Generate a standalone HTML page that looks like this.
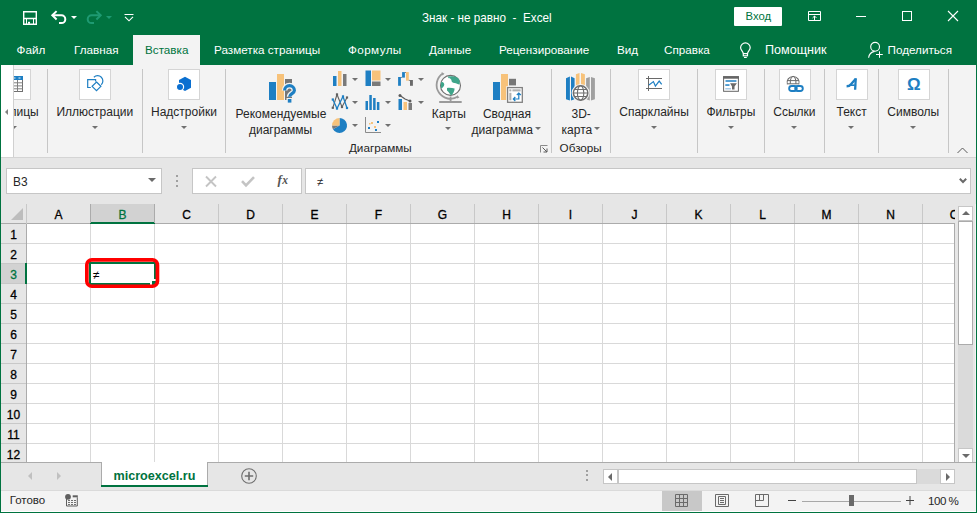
<!DOCTYPE html>
<html><head><meta charset="utf-8"><style>
*{margin:0;padding:0;box-sizing:border-box}
html,body{width:977px;height:513px;overflow:hidden;background:#f3f3f3;font-family:"Liberation Sans",sans-serif;position:relative}
.a{position:absolute}
.t{position:absolute;white-space:nowrap;line-height:1}
svg{position:absolute;overflow:visible}
.tab{color:#fff;font-size:11.7px;top:44px}
.lbl{color:#262626;font-size:12px;top:106px}
.lbl2{color:#262626;font-size:12px;top:122px}
.box{position:absolute;top:69px;width:32px;height:31px;background:#fff;border:1px solid #d5d5d5}
.sep{position:absolute;width:1px;top:69px;height:84px;background:#c6c6c6}
.arr{position:absolute;width:0;height:0;border-left:3.5px solid transparent;border-right:3.5px solid transparent;border-top:3.5px solid #707070}
.inp{position:absolute;background:#fff;border:1px solid #c6c6c6}
.ch{position:absolute;top:204px;height:19px;border-right:1px solid #c8c8c8;color:#000;font-size:12px;text-align:center;line-height:23px;-webkit-text-stroke:0.3px currentColor}
.rh{position:absolute;left:1px;width:25px;height:20px;border-bottom:1px solid #c8c8c8;color:#000;font-size:12px;text-align:center;line-height:23px;-webkit-text-stroke:0.3px currentColor}
</style></head><body>
<div class="a" style="left:0;top:0;width:977px;height:65px;background:#007340"></div>
<svg style="left:23px;top:11px" width="14" height="14" viewBox="0 0 14 14"><path d="M0.7 0.7H13.3V13.3H0.7Z M0.7 7.5H13.3" fill="none" stroke="#fff" stroke-width="1.4"/><path d="M3.5 7.5V13.3 M10.5 7.5V13.3" fill="none" stroke="#fff" stroke-width="1"/><rect x="5" y="10.8" width="2" height="2" fill="#fff"/></svg>
<svg style="left:50px;top:9px" width="18" height="17" viewBox="0 0 18 17"><path d="M2.5 6.3H11.4A3.9 3.9 0 0 1 11.4 14.1H9" fill="none" stroke="#fff" stroke-width="2"/><path d="M6.6 2.1L2.3 6.3L6.6 10.5" fill="none" stroke="#fff" stroke-width="2"/></svg>
<div class="arr" style="left:70.5px;top:15.5px;border-top-color:#fff;border-left-width:3px;border-right-width:3px;border-top-width:3px"></div>
<svg style="left:85px;top:9px" width="18" height="17" viewBox="0 0 18 17"><path d="M15.5 6.3H6.6A3.9 3.9 0 0 0 6.6 14.1H9" fill="none" stroke="#1e9a72" stroke-width="2"/><path d="M11.4 2.1L15.7 6.3L11.4 10.5" fill="none" stroke="#1e9a72" stroke-width="2"/></svg>
<div class="arr" style="left:105.5px;top:15.5px;border-top-color:#1e9a72;border-left-width:3px;border-right-width:3px;border-top-width:3px"></div>
<svg style="left:124px;top:13px" width="10" height="9" viewBox="0 0 10 9"><path d="M0.5 1.5H9.5" stroke="#fff" stroke-width="1"/><path d="M1 3.8L5 7.8L9 3.8" fill="none" stroke="#fff" stroke-width="1.1"/></svg>
<div class="t" style="left:422px;top:12px;font-size:12.6px;color:#fff;transform:scaleX(0.93);transform-origin:0 0">Знак - не равно &nbsp;- &nbsp;Excel</div>
<div class="a" style="left:734px;top:7px;width:48px;height:19px;background:#fff;border-radius:1px"></div>
<div class="t" style="left:745.5px;top:11.3px;font-size:11.3px;color:#007340">Вход</div>
<svg style="left:808px;top:11px" width="13" height="11" viewBox="0 0 13 11"><path d="M0.5 0.5H12.5V9.5H0.5Z M0.5 3.5H12.5" fill="none" stroke="#fff" stroke-width="1"/><path d="M6.5 9.5V5 M4.6 6.9L6.5 5L8.4 6.9" fill="none" stroke="#fff" stroke-width="1"/></svg>
<div class="a" style="left:856px;top:16px;width:10px;height:1px;background:#fff"></div>
<div class="a" style="left:902px;top:11px;width:10px;height:10px;border:1px solid #fff"></div>
<svg style="left:948px;top:11px" width="10" height="10" viewBox="0 0 10 10"><path d="M0 0L10 10M10 0L0 10" stroke="#fff" stroke-width="1.1"/></svg>
<div class="a" style="left:133px;top:35px;width:67px;height:30px;background:#f3f3f3"></div>
<div class="t tab" style="left:16.5px;color:#fff">Файл</div>
<div class="t tab" style="left:74px;color:#fff">Главная</div>
<div class="t tab" style="left:145px;color:#007340">Вставка</div>
<div class="t tab" style="left:214px;color:#fff">Разметка страницы</div>
<div class="t tab" style="left:348px;color:#fff;letter-spacing:0.4px">Формулы</div>
<div class="t tab" style="left:429px;color:#fff">Данные</div>
<div class="t tab" style="left:499px;color:#fff">Рецензирование</div>
<div class="t tab" style="left:617px;color:#fff">Вид</div>
<div class="t tab" style="left:664px;color:#fff">Справка</div>
<div class="t tab" style="left:765px;color:#fff;font-size:12.6px;top:43.5px">Помощник</div>
<div class="t tab" style="left:887.5px;color:#fff">Поделиться</div>
<svg style="left:738px;top:42px" width="15" height="17" viewBox="0 0 15 17"><path d="M5.3 11.6C5.3 9.3 2.6 8.2 2.6 5.7A4.8 4.8 0 0 1 12.2 5.7C12.2 8.2 9.5 9.3 9.5 11.6" fill="none" stroke="#fff" stroke-width="1.2"/><rect x="5.3" y="11.6" width="4.2" height="2.2" fill="none" stroke="#fff" stroke-width="1.2"/><rect x="6" y="15" width="2.8" height="1" fill="#fff"/></svg>
<svg style="left:868px;top:42px" width="16" height="17" viewBox="0 0 16 17"><circle cx="7.1" cy="4.8" r="4.4" fill="none" stroke="#fff" stroke-width="1.1"/><path d="M0.6 15.8C1 12.5 3.2 10 6.6 9.4" fill="none" stroke="#fff" stroke-width="1.1"/><path d="M11.5 9.3V15.8M8 12.5H14.8" stroke="#fff" stroke-width="1"/></svg>
<div class="a" style="left:0;top:65px;width:977px;height:93px;background:#f3f3f3;border-bottom:1px solid #d4d4d4"></div>
<div class="box" style="left:-1px;top:69px;width:32px;height:31px"></div>
<svg style="left:0px;top:66px" width="30" height="30" viewBox="0 0 30 30"><rect x="9" y="10.5" width="13.5" height="15" fill="#fff" stroke="#707070" stroke-width="1"/><rect x="8.5" y="10" width="14.5" height="4" fill="#1e7fc3"/><path d="M13.5 12H15.5M18.5 12H20.5" stroke="#fff" stroke-width="0.9"/><path d="M9 16.8H22.5M9 19.9H22.5M9 22.8H22.5M17.5 14V25.5" stroke="#808080" stroke-width="1"/></svg>
<div class="t" style="left:-10.3px;top:106px;font-size:12px;color:#262626">Таблицы</div>
<div class="arr" style="left:10.7px;top:125.75px;border-top-color:#707070;border-left-width:3.5px;border-right-width:3.5px;border-top-width:3.5px"></div>
<div class="a" style="left:1px;top:65px;width:13px;height:92px;background:#fff;border-right:1px solid #d0d0d0"></div>
<div class="arr" style="left:4.8px;top:108.5px;border-top:3px solid transparent;border-bottom:3px solid transparent;border-right:3px solid #808080;border-left:0"></div>
<div class="sep" style="left:47px"></div>
<div class="box" style="left:79px;top:69px;width:32px;height:31px"></div>
<svg style="left:76px;top:66px" width="40" height="36" viewBox="0 0 40 36"><path d="M14.8 21.5H11.7V13.7H19.6V15.5" fill="none" stroke="#1e7fc3" stroke-width="1.2"/><path d="M17.9 11.2A5 5 0 1 1 25.3 18.7" fill="none" stroke="#1e7fc3" stroke-width="1.2"/><path d="M20.5 16L24.9 20.35L20.5 24.75L16.1 20.35Z" fill="#fff" stroke="#1e7fc3" stroke-width="1.2"/></svg>
<div class="t" style="left:-55.150000000000006px;width:300px;text-align:center;top:106px;font-size:12px;color:#262626;">Иллюстрации</div>
<div class="arr" style="left:92.1px;top:125.75px;border-top-color:#707070;border-left-width:3.5px;border-right-width:3.5px;border-top-width:3.5px"></div>
<div class="sep" style="left:142px"></div>
<div class="box" style="left:168px;top:69px;width:32px;height:31px"></div>
<svg style="left:165px;top:66px" width="40" height="36" viewBox="0 0 40 36"><path d="M20 10.8L26 14V21.8L20 25L14 21.8V14Z" fill="#0a6fd0"/><circle cx="15" cy="21" r="3.6" fill="#0a6fd0" stroke="#fff" stroke-width="1.2"/></svg>
<div class="t" style="left:33.94999999999999px;width:300px;text-align:center;top:106px;font-size:12px;color:#262626;">Надстройки</div>
<div class="arr" style="left:180.7px;top:125.75px;border-top-color:#707070;border-left-width:3.5px;border-right-width:3.5px;border-top-width:3.5px"></div>
<div class="sep" style="left:225px"></div>
<svg style="left:262px;top:68px" width="40" height="40" viewBox="0 0 40 40"><rect x="7" y="14" width="7" height="18" fill="#1e7fc3"/><rect x="15" y="6" width="7" height="26" fill="#f7c27a"/><rect x="23" y="11" width="7" height="21" fill="#767676"/><path d="M22.6 22.5A4.9 4.9 0 0 1 32.4 22.5C32.4 25.5 27.6 25.8 27.6 28.8" fill="none" stroke="#f3f3f3" stroke-width="5.6"/><rect x="24.5" y="30" width="6" height="6" fill="#f3f3f3"/><path d="M22.6 22.5A4.9 4.9 0 0 1 32.4 22.5C32.4 25.5 27.6 25.8 27.6 28.8" fill="none" stroke="#1e7fc3" stroke-width="3.2"/><rect x="25.8" y="31" width="3.6" height="3.6" fill="#1e7fc3"/></svg>
<div class="t" style="left:131.0px;width:300px;text-align:center;top:108px;font-size:12px;color:#262626;">Рекомендуемые</div>
<div class="t" style="left:130.60000000000002px;width:300px;text-align:center;top:124.3px;font-size:12px;color:#262626;">диаграммы</div>
<svg style="left:332px;top:70px" width="16" height="16" viewBox="0 0 16 16"><rect x="1" y="6" width="3.5" height="10" fill="#1e7fc3"/><rect x="6" y="1" width="3.5" height="15" fill="#f7c27a"/><rect x="11" y="4" width="3.5" height="12" fill="#7a7a7a"/></svg>
<svg style="left:365px;top:70px" width="16" height="16" viewBox="0 0 16 16"><rect x="0.5" y="0.5" width="5.5" height="15.5" fill="#1e7fc3"/><rect x="7" y="0.5" width="8.5" height="10" fill="#f7c27a"/><rect x="7" y="11.5" width="8.5" height="4.5" fill="#7a7a7a"/></svg>
<svg style="left:394px;top:68px" width="24" height="22" viewBox="0 0 24 22"><rect x="4.1" y="9" width="2.8" height="8.8" fill="#1e7fc3"/><rect x="8.1" y="4.1" width="2.8" height="5.5" fill="#1e7fc3"/><rect x="12" y="4.1" width="2.8" height="8.5" fill="#f7c27a"/><rect x="16" y="12" width="2.9" height="5.8" fill="#6a6a6a"/><path d="M6.9 9.4H8.1M10.9 4.5H12M14.8 12.4H16" stroke="#555" stroke-width="0.7"/></svg>
<svg style="left:328px;top:92px" width="24" height="20" viewBox="0 0 24 20"><path d="M4.8 15.8L9 2.5L14 15L19 5.5" fill="none" stroke="#606060" stroke-width="1.1"/><rect x="3.6999999999999997" y="14.700000000000001" width="2.2" height="2.2" fill="#606060"/><rect x="7.9" y="1.4" width="2.2" height="2.2" fill="#606060"/><rect x="12.9" y="13.9" width="2.2" height="2.2" fill="#606060"/><rect x="17.9" y="4.4" width="2.2" height="2.2" fill="#606060"/><path d="M4.8 7.5L9 16.5L15 4.5L19 16" fill="none" stroke="#1e7fc3" stroke-width="1.3"/><rect x="3.6999999999999997" y="6.4" width="2.2" height="2.2" fill="#1e7fc3"/><rect x="7.9" y="15.4" width="2.2" height="2.2" fill="#1e7fc3"/><rect x="13.9" y="3.4" width="2.2" height="2.2" fill="#1e7fc3"/><rect x="17.9" y="14.9" width="2.2" height="2.2" fill="#1e7fc3"/></svg>
<svg style="left:365px;top:94px" width="16" height="16" viewBox="0 0 16 16"><rect x="0.5" y="7" width="2.5" height="9" fill="#1e7fc3"/><rect x="4.3" y="1" width="2.5" height="15" fill="#1e7fc3"/><rect x="8.1" y="4" width="2.5" height="12" fill="#1e7fc3"/><rect x="11.9" y="8" width="2.5" height="8" fill="#1e7fc3"/></svg>
<svg style="left:398px;top:94px" width="16" height="16" viewBox="0 0 16 16"><rect x="0.5" y="5" width="3.5" height="11" fill="#1e7fc3"/><rect x="5.5" y="8" width="3.5" height="8" fill="#f7c27a"/><rect x="10.5" y="9" width="3.5" height="7" fill="#7a7a7a"/><path d="M2 1.5L7 5L12 7" fill="none" stroke="#5a5a5a" stroke-width="1.2"/><circle cx="2" cy="1.5" r="1.5" fill="#5a5a5a"/><circle cx="12" cy="7" r="1.5" fill="#5a5a5a"/></svg>
<svg style="left:331px;top:117px" width="17" height="17" viewBox="0 0 17 17"><path d="M8.5 8.5V1A7.5 7.5 0 1 1 2 12.2Z" fill="#1e7fc3"/><path d="M8.5 8.5L2 12.2A7.5 7.5 0 0 1 1 8.5Z" fill="#7a7a7a"/><path d="M8.5 8.5H1A7.5 7.5 0 0 1 8.5 1Z" fill="#f7c27a"/></svg>
<svg style="left:365px;top:117px" width="16" height="16" viewBox="0 0 16 16"><path d="M0.5 0V15.5H16" fill="none" stroke="#8a8a8a" stroke-width="1"/><rect x="3" y="10" width="2" height="2" fill="#1e7fc3"/><rect x="6" y="5" width="2" height="2" fill="#f7c27a"/><rect x="9" y="9" width="2" height="2" fill="#f7c27a"/><rect x="12" y="4" width="2" height="2" fill="#1e7fc3"/><rect x="4" y="6" width="1.5" height="1.5" fill="#f7c27a"/><rect x="10" y="12" width="2" height="2" fill="#1e7fc3"/></svg>
<div class="arr" style="left:351.8px;top:78.05px;border-top-color:#707070;border-left-width:3.5px;border-right-width:3.5px;border-top-width:3.5px"></div>
<div class="arr" style="left:351.8px;top:101.05px;border-top-color:#707070;border-left-width:3.5px;border-right-width:3.5px;border-top-width:3.5px"></div>
<div class="arr" style="left:351.8px;top:123.55px;border-top-color:#707070;border-left-width:3.5px;border-right-width:3.5px;border-top-width:3.5px"></div>
<div class="arr" style="left:384.8px;top:78.05px;border-top-color:#707070;border-left-width:3.5px;border-right-width:3.5px;border-top-width:3.5px"></div>
<div class="arr" style="left:384.8px;top:101.05px;border-top-color:#707070;border-left-width:3.5px;border-right-width:3.5px;border-top-width:3.5px"></div>
<div class="arr" style="left:384.8px;top:123.55px;border-top-color:#707070;border-left-width:3.5px;border-right-width:3.5px;border-top-width:3.5px"></div>
<div class="arr" style="left:417.8px;top:78.05px;border-top-color:#707070;border-left-width:3.5px;border-right-width:3.5px;border-top-width:3.5px"></div>
<div class="arr" style="left:417.8px;top:101.05px;border-top-color:#707070;border-left-width:3.5px;border-right-width:3.5px;border-top-width:3.5px"></div>
<svg style="left:430px;top:66px" width="40" height="40" viewBox="0 0 40 40"><path d="M12.8 7.5A13 13 0 0 0 28 30.5" fill="none" stroke="#9a9a9a" stroke-width="1.8"/><path d="M11.5 6L14.5 7.8L12.5 9.5Z M27 29L29.5 31.5L27 32.5Z" fill="#9a9a9a"/><circle cx="20.5" cy="19.4" r="10" fill="#fff" stroke="#707070" stroke-width="1.1"/><path d="M19.5 10.5C22 9.8 26 10 28.5 12.5C29.8 14 30 16.5 29.5 18.5C27.5 18.5 26.5 17 24.5 17C22.5 17 21 15.5 21.5 14C20.5 13 19.5 12 19.5 10.5Z M11 16.5C12.5 15.5 14 16.5 14.3 18.5C14 20.5 12.5 22 11.2 22.5C10.7 20.5 10.6 18.5 11 16.5Z M17 22C19.5 21.5 22.5 22 24.6 22.5C24.6 25 23 28 21 29.6C19.8 28 19 26 17 24.5Z M18 10.5L19.8 10.2L19.5 12.5L18.3 12Z" fill="#3fa58a"/><rect x="19.7" y="30.5" width="1.8" height="5" fill="#9a9a9a"/><rect x="9.2" y="35" width="22.5" height="2" fill="#9a9a9a"/></svg>
<div class="t" style="left:298.85px;width:300px;text-align:center;top:108px;font-size:12px;color:#262626;">Карты</div>
<div class="arr" style="left:444.8px;top:127.25px;border-top-color:#707070;border-left-width:3.5px;border-right-width:3.5px;border-top-width:3.5px"></div>
<svg style="left:430px;top:66px" width="100" height="42" viewBox="0 0 100 42"><rect x="63" y="16" width="7" height="18" fill="#1e7fc3"/><rect x="71" y="8" width="7" height="26" fill="#f7c27a"/><rect x="79" y="12.8" width="7" height="6.6" fill="#767676"/><rect x="76.2" y="20.2" width="17.5" height="17.5" fill="#f3f3f3"/><rect x="77.6" y="21.6" width="14.7" height="14.7" fill="#fff" stroke="#808080" stroke-width="1.3"/><rect x="79.3" y="23.3" width="2.1" height="2.1" fill="#b0b0b0"/><rect x="82.4" y="23.3" width="8.2" height="2.1" fill="#b0b0b0"/><rect x="79.3" y="26.8" width="2.1" height="7.5" fill="#b0b0b0"/><path d="M83.5 33H88.8V27 M86.8 29L88.8 27L90.8 29 M85.3 31L83.3 33L85.3 35" fill="none" stroke="#1e7fc3" stroke-width="1.2"/></svg>
<div class="t" style="left:356.95000000000005px;width:300px;text-align:center;top:108px;font-size:12px;color:#262626;">Сводная</div>
<div class="t" style="left:352.25px;width:300px;text-align:center;top:124.3px;font-size:12px;color:#262626;">диаграмма</div>
<div class="arr" style="left:535.0px;top:127.25px;border-top-color:#707070;border-left-width:3.5px;border-right-width:3.5px;border-top-width:3.5px"></div>
<div class="t" style="left:230.3px;width:300px;text-align:center;top:142.3px;font-size:11.7px;color:#262626;">Диаграммы</div>
<svg style="left:540px;top:145px" width="8" height="8" viewBox="0 0 8 8"><path d="M0.5 7.5V0.5H7.5" fill="none" stroke="#8a8a8a" stroke-width="1"/><path d="M2.5 2.5L7 7M7 3.5V7H3.5" fill="none" stroke="#5a5a5a" stroke-width="1"/></svg>
<div class="sep" style="left:551px"></div>
<svg style="left:555px;top:66px" width="50" height="42" viewBox="0 0 50 42"><path d="M11 12.3L14.9 10.6V34.4L11 33.2Z M16 10.6L19.6 12.3V33.2L16 34.4Z" fill="#1e7fc3"/><path d="M20.9 8.2L24.5 7V22H20.9Z M26 7L29.9 8.2V22H26Z" fill="#f7c27a"/><path d="M31.1 12.3L34.8 11V34.4L31.1 33.2Z M36 11L39.9 12.3V33.2L36 34.4Z" fill="#a0a0a0"/><circle cx="25.6" cy="27" r="9" fill="#f3f3f3"/><circle cx="25.6" cy="27" r="7.2" fill="#fff" stroke="#6f6f6f" stroke-width="1.5"/><ellipse cx="25.6" cy="27" rx="3.2" ry="7.2" fill="none" stroke="#6f6f6f" stroke-width="1.1"/><path d="M18.4 27H32.8M19.8 23.5H31.4M19.8 30.5H31.4" stroke="#6f6f6f" stroke-width="1.1"/></svg>
<div class="t" style="left:431.15px;width:300px;text-align:center;top:108px;font-size:12px;color:#262626;">3D-</div>
<div class="t" style="left:426.9000000000001px;width:300px;text-align:center;top:124.3px;font-size:12px;color:#262626;">карта</div>
<div class="arr" style="left:594.0px;top:127.25px;border-top-color:#707070;border-left-width:3.5px;border-right-width:3.5px;border-top-width:3.5px"></div>
<div class="t" style="left:430.70000000000005px;width:300px;text-align:center;top:142.3px;font-size:11.7px;color:#262626;">Обзоры</div>
<div class="sep" style="left:610px"></div>
<div class="box" style="left:638px;top:69px;width:32px;height:31px"></div>
<svg style="left:635px;top:66px" width="40" height="36" viewBox="0 0 40 36"><path d="M13.5 10V25M11 12.5H27M11 22.5H27" stroke="#6a6a6a" stroke-width="1"/><path d="M14 19L18.4 15.6L20.4 20L24.2 15.1L26.7 18.4" fill="none" stroke="#1e7fc3" stroke-width="1.2"/></svg>
<div class="t" style="left:504.0px;width:300px;text-align:center;top:106px;font-size:12px;color:#262626;">Спарклайны</div>
<div class="arr" style="left:651.0px;top:125.75px;border-top-color:#707070;border-left-width:3.5px;border-right-width:3.5px;border-top-width:3.5px"></div>
<div class="sep" style="left:697px"></div>
<div class="box" style="left:715px;top:69px;width:32px;height:31px"></div>
<svg style="left:712px;top:66px" width="40" height="36" viewBox="0 0 40 36"><rect x="11.6" y="10.7" width="14.8" height="14.6" fill="#fff" stroke="#666" stroke-width="1"/><rect x="11.1" y="10.2" width="15.8" height="2.5" fill="#666"/><rect x="13.3" y="14.3" width="11.3" height="1.5" rx="0.7" fill="#1e7fc3"/><rect x="13.3" y="18.3" width="4.2" height="1.5" fill="#1e7fc3"/><rect x="13.3" y="22" width="5.7" height="1.5" fill="#a9cbe6"/><path d="M18.1 17.2H24.9L22.5 20.5V23.5H20V20.5Z" fill="#6a6a6a"/></svg>
<div class="t" style="left:580.85px;width:300px;text-align:center;top:106px;font-size:12px;color:#262626;">Фильтры</div>
<div class="arr" style="left:727.8px;top:125.75px;border-top-color:#707070;border-left-width:3.5px;border-right-width:3.5px;border-top-width:3.5px"></div>
<div class="sep" style="left:764px"></div>
<div class="box" style="left:779px;top:69px;width:32px;height:31px"></div>
<svg style="left:776px;top:66px" width="40" height="36" viewBox="0 0 40 36"><path d="M11.4 18.3A6 6 0 1 1 22.8 18.3" fill="#fff" stroke="#6a6a6a" stroke-width="1.1"/><path d="M11.5 17.8H22.7M11.9 14.6H22.3M14.3 14.6V17.8M19.9 14.6V17.8M14.3 14.6Q15 10.5 17.1 10.3Q19.2 10.5 19.9 14.6" fill="none" stroke="#6a6a6a" stroke-width="1"/><rect x="13.15" y="20" width="7.6" height="5" rx="2.5" fill="none" stroke="#1e7fc3" stroke-width="1.9"/><rect x="19.2" y="20" width="7.6" height="5" rx="2.5" fill="none" stroke="#1e7fc3" stroke-width="1.9"/></svg>
<div class="t" style="left:644.4px;width:300px;text-align:center;top:106px;font-size:12px;color:#262626;">Ссылки</div>
<div class="arr" style="left:790.9px;top:125.75px;border-top-color:#707070;border-left-width:3.5px;border-right-width:3.5px;border-top-width:3.5px"></div>
<div class="sep" style="left:824px"></div>
<div class="box" style="left:836px;top:69px;width:32px;height:31px"></div>
<svg style="left:836px;top:70px" width="30" height="30" viewBox="0 0 30 30"><path d="M10.6 16.3C12.5 16.3 13.8 15.8 15 14.2L19.8 8.8" fill="none" stroke="#1e7fc3" stroke-width="2.4" stroke-linejoin="round"/><path d="M19.8 8.3L19.1 19.8" fill="none" stroke="#1e7fc3" stroke-width="2.3"/><path d="M14 15.2L18.8 15.2" stroke="#1e7fc3" stroke-width="1.6"/></svg>
<div class="t" style="left:701.65px;width:300px;text-align:center;top:106px;font-size:12px;color:#262626;">Текст</div>
<div class="arr" style="left:847.5px;top:125.75px;border-top-color:#707070;border-left-width:3.5px;border-right-width:3.5px;border-top-width:3.5px"></div>
<div class="sep" style="left:878px"></div>
<div class="box" style="left:898px;top:69px;width:32px;height:31px"></div>
<div class="t" style="left:907px;top:76px;font-size:17px;font-weight:bold;color:#1e7fc3">&#937;</div>
<div class="t" style="left:763.25px;width:300px;text-align:center;top:106px;font-size:12px;color:#262626;">Символы</div>
<div class="arr" style="left:909.8px;top:125.75px;border-top-color:#707070;border-left-width:3.5px;border-right-width:3.5px;border-top-width:3.5px"></div>
<div class="sep" style="left:948px"></div>
<svg style="left:957px;top:147px" width="11" height="7" viewBox="0 0 11 7"><path d="M0.5 6L5.5 1L10.5 6" fill="none" stroke="#5a5a5a" stroke-width="1"/></svg>
<div class="a" style="left:0;top:158px;width:977px;height:46px;background:#e6e6e6"></div>
<div class="inp" style="left:6px;top:168px;width:156px;height:26px"></div>
<div class="t" style="left:13px;top:177px;font-size:11.9px;color:#262626">B3</div>
<div class="arr" style="left:147.5px;top:177.8px;border-top-color:#6a6a6a;border-left-width:4px;border-right-width:4px;border-top-width:4px"></div>
<div class="a" style="left:176px;top:175px;width:2px;height:2px;background:#a0a0a0"></div>
<div class="a" style="left:176px;top:180px;width:2px;height:2px;background:#a0a0a0"></div>
<div class="a" style="left:176px;top:185px;width:2px;height:2px;background:#a0a0a0"></div>
<div class="inp" style="left:192px;top:168px;width:110px;height:26px"></div>
<svg style="left:205px;top:176px" width="12" height="11" viewBox="0 0 12 11"><path d="M1 0.5L11 10.5M11 0.5L1 10.5" stroke="#c4c4c4" stroke-width="1.9"/></svg>
<svg style="left:241px;top:176px" width="14" height="11" viewBox="0 0 14 11"><path d="M1 5.2L5 9.4L13 1.2" fill="none" stroke="#c4c4c4" stroke-width="2.6"/></svg>
<div class="t" style="left:277.5px;top:173px;font-size:13px;font-style:italic;font-weight:bold;color:#555;font-family:'Liberation Serif',serif">f<span style="font-size:11.5px;margin-left:0.5px">x</span></div>
<div class="inp" style="left:305px;top:168px;width:666px;height:26px"></div>
<div class="t" style="left:317px;top:176.5px;font-size:11.5px;color:#262626">&#8800;</div>
<svg style="left:959px;top:178px" width="8" height="5" viewBox="0 0 8 5"><path d="M0.8 0.8L4 4L7.2 0.8" fill="none" stroke="#6a6a6a" stroke-width="2"/></svg>
<div class="a" style="left:1px;top:204px;width:954px;height:20px;background:#e6e6e6;border-bottom:1px solid #ababab"></div>
<div class="a" style="left:1px;top:204px;width:26px;height:20px;border-right:1px solid #c8c8c8"></div>
<svg style="left:11px;top:208px" width="12" height="12" viewBox="0 0 12 12"><path d="M12 0V12H0Z" fill="#bdbdbd"/></svg>
<div class="ch" style="left:27px;width:64px;color:#000">A</div>
<div class="ch" style="left:91px;width:64px;background:#d2d2d2;color:#007340">B</div>
<div class="ch" style="left:155px;width:64px;color:#000">C</div>
<div class="ch" style="left:219px;width:64px;color:#000">D</div>
<div class="ch" style="left:283px;width:64px;color:#000">E</div>
<div class="ch" style="left:347px;width:64px;color:#000">F</div>
<div class="ch" style="left:411px;width:64px;color:#000">G</div>
<div class="ch" style="left:475px;width:64px;color:#000">H</div>
<div class="ch" style="left:539px;width:64px;color:#000">I</div>
<div class="ch" style="left:603px;width:64px;color:#000">J</div>
<div class="ch" style="left:667px;width:64px;color:#000">K</div>
<div class="ch" style="left:731px;width:64px;color:#000">L</div>
<div class="ch" style="left:795px;width:64px;color:#000">M</div>
<div class="ch" style="left:859px;width:64px;color:#000">N</div>
<div class="ch" style="left:923px;width:64px;color:#000">O</div>
<div class="a" style="left:90px;top:222px;width:65px;height:2px;background:#007340"></div>
<div class="a" style="left:90px;top:204px;width:1px;height:19px;background:#ababab"></div>
<div class="a" style="left:154px;top:204px;width:1px;height:19px;background:#ababab"></div>
<div class="a" style="left:1px;top:224px;width:26px;height:238px;background:#e6e6e6;border-right:1px solid #ababab"></div>
<div class="rh" style="top:224px;color:#000">1</div>
<div class="rh" style="top:244px;color:#000">2</div>
<div class="rh" style="top:264px;background:#d2d2d2;color:#007340">3</div>
<div class="rh" style="top:284px;color:#000">4</div>
<div class="rh" style="top:304px;color:#000">5</div>
<div class="rh" style="top:324px;color:#000">6</div>
<div class="rh" style="top:344px;color:#000">7</div>
<div class="rh" style="top:364px;color:#000">8</div>
<div class="rh" style="top:384px;color:#000">9</div>
<div class="rh" style="top:404px;color:#000">10</div>
<div class="rh" style="top:424px;color:#000">11</div>
<div class="rh" style="top:444px;color:#000">12</div>
<div class="a" style="left:25px;top:263px;width:2px;height:21px;background:#007340"></div>
<div class="a" style="left:27px;top:224px;width:928px;height:238px;background-color:#fff;background-image:linear-gradient(to right, transparent 63px, #d9d9d9 63px, #d9d9d9 64px, transparent 64px),linear-gradient(to bottom, transparent 19px, #d9d9d9 19px, #d9d9d9 20px, transparent 20px);background-size:64px 20px,100% 20px;border-right:1px solid #ababab"></div>
<div class="a" style="left:89px;top:262px;width:67px;height:23px;border:2px solid #007340"></div>
<div class="a" style="left:150px;top:279px;width:6px;height:6px;background:#fff"></div>
<div class="a" style="left:152px;top:281px;width:5px;height:5px;background:#007340"></div>
<div class="t" style="left:93px;top:269px;font-size:12px;color:#000">&#8800;</div>
<svg style="left:80px;top:253px" width="85" height="40" viewBox="0 0 85 40"><rect x="6.85" y="6.85" width="70.6" height="26.4" rx="5" fill="none" stroke="#ff0000" stroke-width="3.7"/></svg>
<div class="a" style="left:955px;top:204px;width:20px;height:258px;background:#e6e6e6"></div>
<div class="a" style="left:958px;top:206px;width:15px;height:255px;background:#dadada"></div>
<div class="a" style="left:958px;top:206px;width:15px;height:15px;background:#fff;border:1px solid #c6c6c6"></div>
<div class="arr" style="left:961.5px;top:211px;border-bottom:4px solid #6a6a6a;border-left:4px solid transparent;border-right:4px solid transparent;border-top:0"></div>
<div class="a" style="left:958px;top:221px;width:15px;height:124px;background:#fff;border:1px solid #ababab"></div>
<div class="a" style="left:958px;top:448px;width:15px;height:15px;background:#fff;border:1px solid #c6c6c6"></div>
<div class="arr" style="left:961.5px;top:453.5px;border-top:4px solid #6a6a6a;border-left:4px solid transparent;border-right:4px solid transparent;border-bottom:0"></div>
<div class="a" style="left:0;top:462px;width:977px;height:28px;background:#e6e6e6;border-top:1px solid #ababab"></div>
<div class="arr" style="left:28px;top:472px;border-top:4px solid transparent;border-bottom:4px solid transparent;border-right:4px solid #c0c0c0;border-left:0"></div>
<div class="arr" style="left:57px;top:472px;border-top:4px solid transparent;border-bottom:4px solid transparent;border-left:4px solid #c0c0c0;border-right:0"></div>
<div class="a" style="left:101px;top:462px;width:107px;height:25px;background:#fff;border-left:1px solid #ababab;border-right:1px solid #ababab"></div>
<div class="a" style="left:101px;top:485px;width:107px;height:2px;background:#007340"></div>
<div class="t" style="left:113.5px;top:469.7px;font-size:12.6px;font-weight:bold;color:#007340">microexcel.ru</div>
<svg style="left:241px;top:468px" width="16" height="16" viewBox="0 0 16 16"><circle cx="8" cy="8" r="7.3" fill="none" stroke="#6f6f6f" stroke-width="1.1"/><path d="M8 3.8V12.2M3.8 8H12.2" stroke="#6f6f6f" stroke-width="1.6"/></svg>
<div class="a" style="left:586px;top:469.5px;width:2px;height:2px;background:#a0a0a0"></div>
<div class="a" style="left:586px;top:474px;width:2px;height:2px;background:#a0a0a0"></div>
<div class="a" style="left:586px;top:478.5px;width:2px;height:2px;background:#a0a0a0"></div>
<div class="a" style="left:603px;top:469px;width:352px;height:15px;background:#dadada"></div>
<div class="a" style="left:603px;top:469px;width:15px;height:15px;background:#fff;border:1px solid #c6c6c6"></div>
<div class="arr" style="left:607.5px;top:472.5px;border-top:4px solid transparent;border-bottom:4px solid transparent;border-right:4px solid #6a6a6a;border-left:0"></div>
<div class="a" style="left:618px;top:469px;width:299px;height:15px;background:#fff;border:1px solid #c6c6c6"></div>
<div class="a" style="left:940px;top:469px;width:15px;height:15px;background:#fff;border:1px solid #c6c6c6"></div>
<div class="arr" style="left:946px;top:472.5px;border-top:4px solid transparent;border-bottom:4px solid transparent;border-left:4px solid #6a6a6a;border-right:0"></div>
<div class="a" style="left:0;top:490px;width:977px;height:23px;background:#f3f3f3;border-top:1px solid #dadada"></div>
<div class="t" style="left:9.7px;top:494.7px;font-size:11.5px;color:#262626">Готово</div>
<svg style="left:65px;top:494px" width="14" height="14" viewBox="0 0 14 14"><path d="M1.5 4.5V12H12.3V3.3" fill="none" stroke="#5f5f5f" stroke-width="1"/><rect x="7.7" y="1.3" width="5.1" height="2" fill="#5f5f5f"/><circle cx="3" cy="2.8" r="2.9" fill="#5f5f5f"/><path d="M3 6.5H11.3M3 8.5H11.3M3 10.5H11.3" stroke="#707070" stroke-width="1" stroke-dasharray="2 1"/></svg>
<div class="a" style="left:662px;top:491px;width:40px;height:20px;background:#c8c8c8"></div>
<svg style="left:675px;top:494px" width="13" height="13" viewBox="0 0 13 13"><path d="M0.5 0.5H12.5V12.5H0.5Z M0.5 4.5H12.5M0.5 8.5H12.5M4.5 0.5V12.5M8.5 0.5V12.5" fill="none" stroke="#6a6a6a" stroke-width="1"/></svg>
<svg style="left:715px;top:494px" width="14" height="13" viewBox="0 0 14 13"><path d="M0.5 0.5H13.5V12.5H0.5Z M3.5 2.5H10.5V10.5H3.5Z M5 4.5H9M5 6.5H9M5 8.5H9" fill="none" stroke="#6a6a6a" stroke-width="1"/></svg>
<svg style="left:755px;top:494px" width="14" height="13" viewBox="0 0 14 13"><path d="M0.5 0.5H13.5V12.5H0.5Z M0.5 6.5H8.5V0.5 M4.5 0.5V6.5" fill="none" stroke="#6a6a6a" stroke-width="1"/></svg>
<div class="a" style="left:788px;top:500px;width:8px;height:1.2px;background:#444"></div>
<div class="a" style="left:802px;top:501px;width:99px;height:1px;background:#a8a8a8"></div>
<div class="a" style="left:849px;top:495px;width:5px;height:11px;background:#6a6a6a"></div>
<svg style="left:906px;top:496px" width="9" height="9" viewBox="0 0 9 9"><path d="M4 0V9M0 4.5H8" stroke="#444" stroke-width="1"/></svg>
<div class="t" style="left:928px;top:495px;font-size:11.6px;color:#262626;letter-spacing:-0.5px">100 %</div>
<div class="a" style="left:0;top:65px;width:1px;height:448px;background:#007340"></div>
<div class="a" style="left:976px;top:65px;width:1px;height:448px;background:#007340"></div>
<div class="a" style="left:1px;top:511px;width:975px;height:1px;background:#fff"></div>
<div class="a" style="left:0;top:512px;width:977px;height:1px;background:#007340"></div>
</body></html>
